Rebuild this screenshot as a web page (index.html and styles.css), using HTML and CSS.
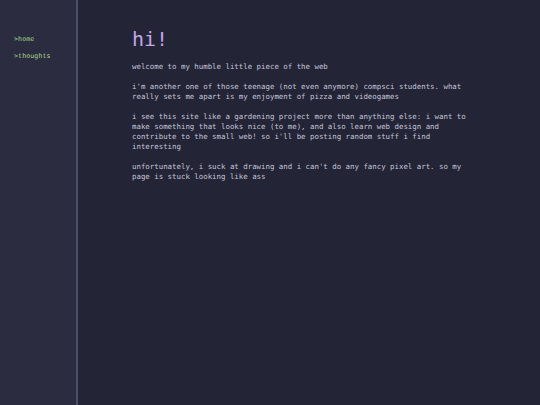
FILE: index.html
```html
<!DOCTYPE html>
<html>
<head>
<meta charset="utf-8">
<link rel="stylesheet" href="styles.css">
</head>
<body>
<div class="layout">
  <nav class="sidebar">
    <a class="nav-link" href="#">&gt;home</a>
    <a class="nav-link" href="#">&gt;thoughts</a>
  </nav>
  <main class="content">
    <h1 class="title">hi!</h1>
    <p>welcome to my humble little piece of the web</p>
    <p>i'm another one of those teenage (not even anymore) compsci students. what<br>really sets me apart is my enjoyment of pizza and videogames</p>
    <p>i see this site like a gardening project more than anything else: i want to<br>make something that looks nice (to me), and also learn web design and<br>contribute to the small web! so i'll be posting random stuff i find<br>interesting</p>
    <p>unfortunately, i suck at drawing and i can't do any fancy pixel art. so my<br>page is stuck looking like ass</p>
  </main>
</div>
</body>
</html>
```
FILE: styles.css
```css
html, body {
  margin: 0;
  height: 100%;
  background: #232435;
}
.layout {
  display: flex;
  height: 405px;
}
.sidebar {
  width: 78px;
  background: #2b2c40;
  border-right: 2px solid #4a5068;
  display: flex;
  flex-direction: column;
  gap: 9px;
  padding: 35px 0 0 14px;
  box-sizing: border-box;
}
.nav-link {
  font-family: "DejaVu Sans Mono", monospace;
  font-size: 6.6px;
  line-height: 8px;
  letter-spacing: 0.1px;
  color: #a8d48c;
  text-decoration: none;
}
.content {
  flex: 1;
  padding: 27px 0 0 54px;
  font-family: "DejaVu Sans Mono", monospace;
  font-size: 7.4px;
  line-height: 10px;
  color: #c3c5db;
}
.title {
  margin: 0 0 11px 0;
  font-size: 20px;
  line-height: 24px;
  font-weight: normal;
  color: #c6a6ec;
}
.content p {
  margin: 0 0 10px 0;
}
```
